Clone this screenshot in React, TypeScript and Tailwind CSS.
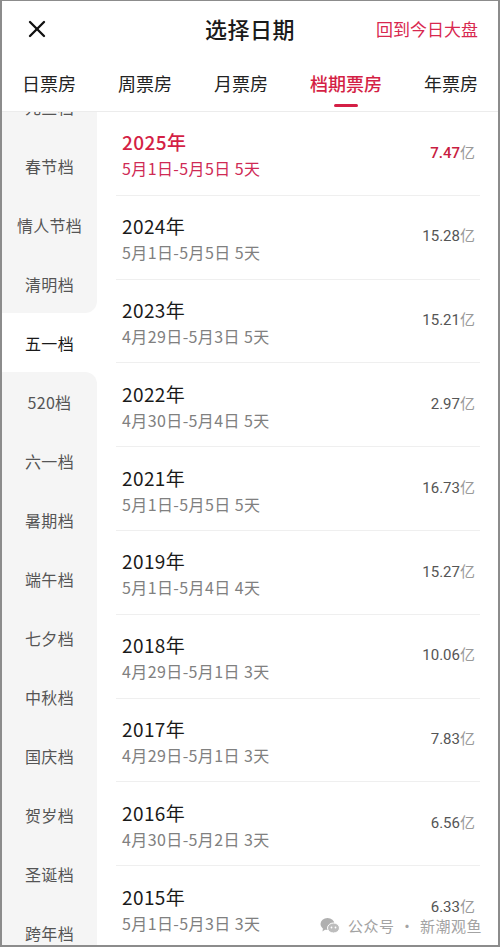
import { X } from "lucide-react";

const tabs = ["日票房", "周票房", "月票房", "档期票房", "年票房"];

const seasons = [
  "元旦档", "春节档", "情人节档", "清明档", "五一档", "520档", "六一档", "暑期档",
  "端午档", "七夕档", "中秋档", "国庆档", "贺岁档", "圣诞档", "跨年档",
];

const rows = [
  { year: "2025年", range: "5月1日-5月5日 5天", value: "7.47" },
  { year: "2024年", range: "5月1日-5月5日 5天", value: "15.28" },
  { year: "2023年", range: "4月29日-5月3日 5天", value: "15.21" },
  { year: "2022年", range: "4月30日-5月4日 5天", value: "2.97" },
  { year: "2021年", range: "5月1日-5月5日 5天", value: "16.73" },
  { year: "2019年", range: "5月1日-5月4日 4天", value: "15.27" },
  { year: "2018年", range: "4月29日-5月1日 3天", value: "10.06" },
  { year: "2017年", range: "4月29日-5月1日 3天", value: "7.83" },
  { year: "2016年", range: "4月30日-5月2日 3天", value: "6.56" },
  { year: "2015年", range: "5月1日-5月3日 3天", value: "6.33" },
];

const selected = 4;

export default function App() {
  return (
    <div className="relative w-[500px] h-[947px] overflow-hidden bg-white border-t border-l-2 border-r-2 border-b-2 border-[#8c8c8c] font-['Noto_Sans_CJK_SC',sans-serif]">
      {/* Top bar */}
      <div className="relative h-[55px] flex items-center justify-center">
        <X className="absolute left-[21px] top-[14px] w-[28px] h-[28px] text-[#111]" strokeWidth={2} />
        <span className="text-[22px] font-medium text-[#1a1a1a] tracking-[0.5px]">选择日期</span>
        <span className="absolute right-[20px] top-[15px] text-[17px] text-[#d8284f]">回到今日大盘</span>
      </div>

      {/* Tabs */}
      <div className="relative h-[56px] flex items-center justify-between px-[20px] border-b border-[#ececec] z-10 bg-white">
        {tabs.map((t, i) => (
          <div key={t} className="relative flex flex-col items-center">
            <span className={`text-[18px] ${i === 3 ? "text-[#d41f45] font-medium" : "text-[#222]"}`}>{t}</span>
            {i === 3 && (
              <span className="absolute top-[34px] w-[24px] h-[3px] rounded-full bg-[#d41f45]" />
            )}
          </div>
        ))}
      </div>

      {/* Body */}
      <div className="flex">
        {/* Season list */}
        <div className="w-[95px] shrink-0 -mt-[35px]">
          {seasons.map((s, i) => (
            <div
              key={s}
              className={`h-[59px] flex items-center justify-center text-[16px] tracking-[0.3px] ${
                i === selected ? "bg-white text-[#1a1a1a]" : "bg-[#f5f5f5] text-[#555]"
              } ${i === selected - 1 ? "rounded-br-[12px]" : ""} ${i === selected + 1 ? "rounded-tr-[12px]" : ""}`}
            >
              {s}
            </div>
          ))}
        </div>

        {/* Years */}
        <div className="flex-1 pl-[19px] pr-[18px]">
          {rows.map((r, i) => (
            <div key={r.year} className="h-[83.8px] flex items-center justify-between border-b border-[#efefef] pl-[6px] pr-[5px]">
              <div className="flex flex-col mt-[3px]">
                <span className={`text-[19px] leading-[26px] tracking-[0.4px] ${i === 0 ? "text-[#d41f45] font-medium" : "text-[#1a1a1a]"}`}>
                  {r.year}
                </span>
                <span className={`mt-[1px] text-[16px] leading-[24px] tracking-[0.4px] ${i === 0 ? "text-[#cf2a55]" : "text-[#808080]"}`}>
                  {r.range}
                </span>
              </div>
              <div className="font-['Roboto',sans-serif] text-[15px] -mt-[2px]">
                <span className={i === 0 ? "text-[#c81d42] font-medium" : "text-[#555]"}>{r.value}</span>
                <span className="text-[#999] font-['Noto_Sans_CJK_SC',sans-serif]">亿</span>
              </div>
            </div>
          ))}
        </div>
      </div>

      {/* Watermark */}
      <div className="absolute right-[16px] bottom-[9px] flex items-center gap-[8px] text-[15px] leading-[20px] text-[#a3a3a3]">
        <svg width="20" height="18" viewBox="0 0 20 18" fill="#b0b0b0">
          <ellipse cx="7.5" cy="7" rx="7" ry="6" />
          <path d="M3 11 L2.5 14.5 L6 12 Z" />
          <ellipse cx="13.5" cy="11" rx="6" ry="5" fill="#bdbdbd" stroke="#fff" strokeWidth="1" />
          <circle cx="11.5" cy="10.5" r="0.9" fill="#fff" />
          <circle cx="15.5" cy="10.5" r="0.9" fill="#fff" />
        </svg>
        <span className="tracking-[0.5px]">
          公众号<span className="mx-[5px]">·</span>新潮观鱼
        </span>
      </div>
    </div>
  );
}
